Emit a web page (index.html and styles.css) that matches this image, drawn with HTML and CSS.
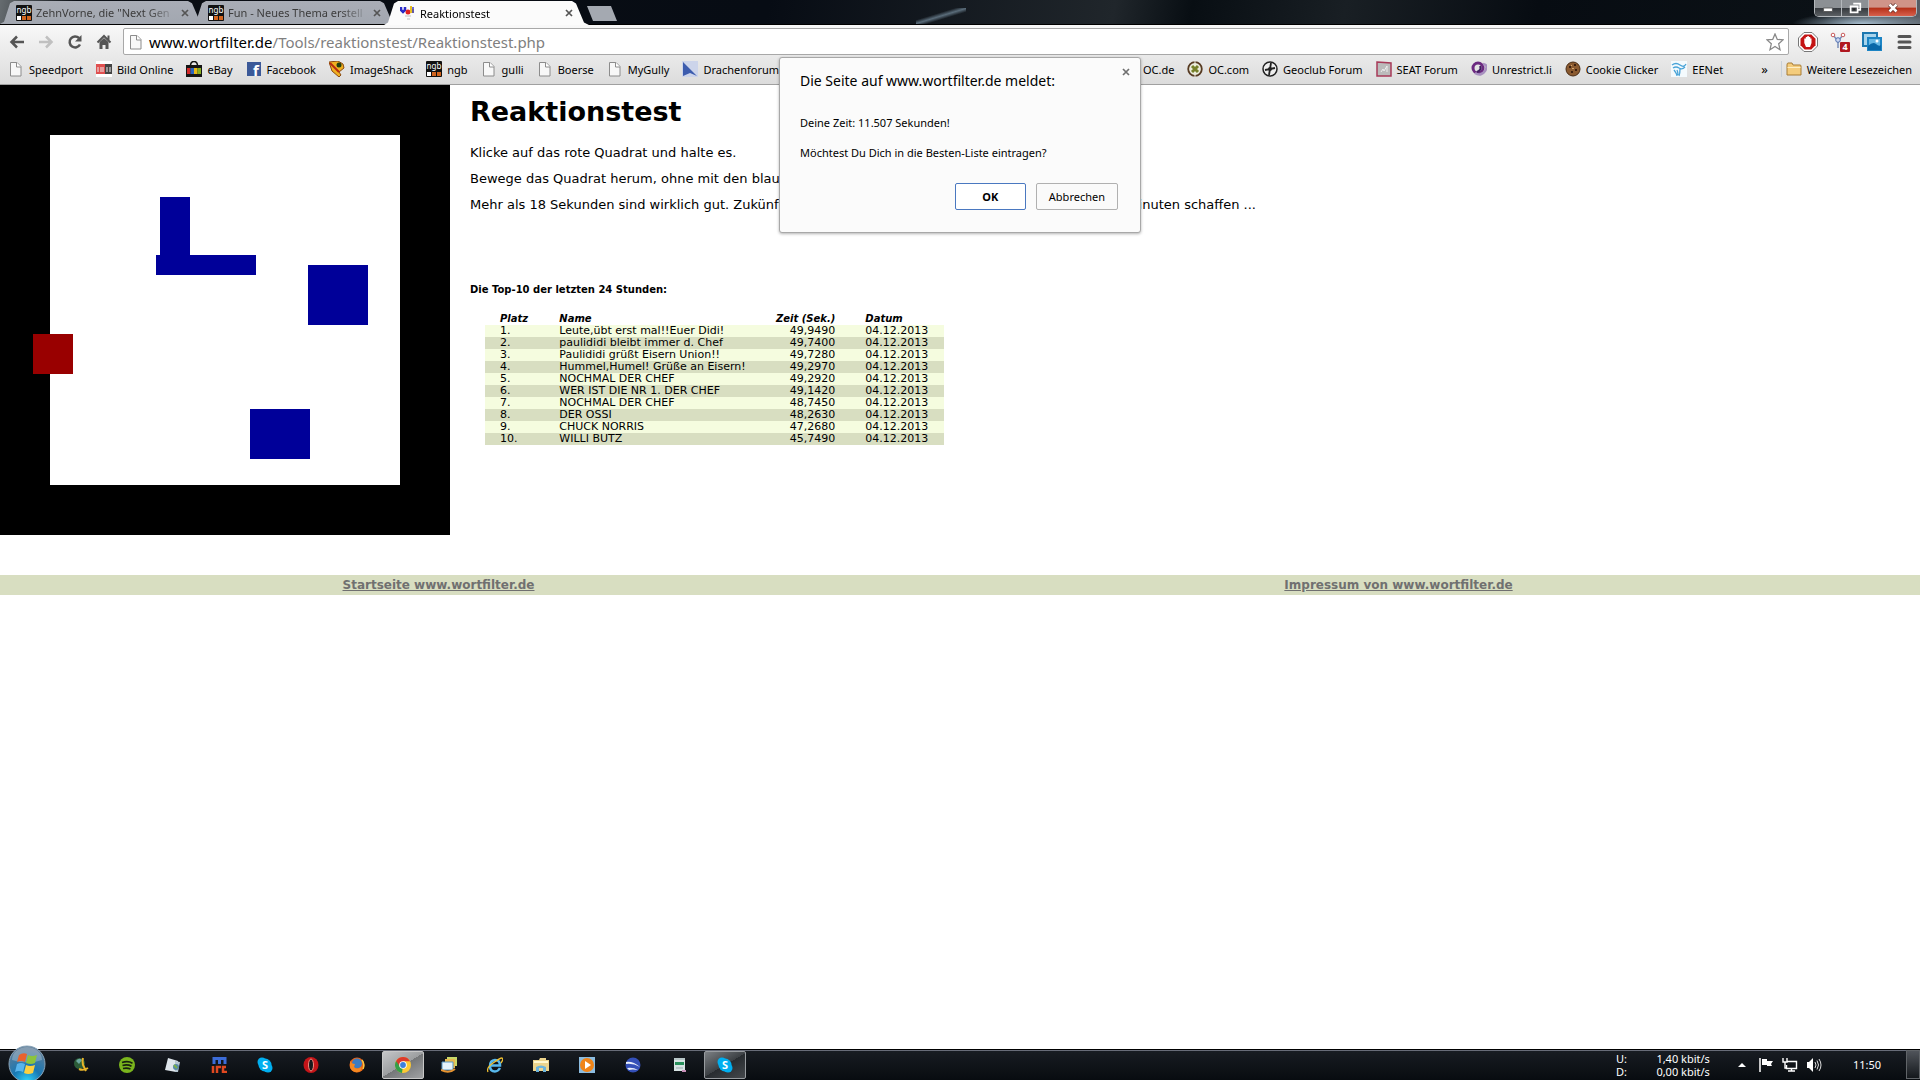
FILE: index.html
```html
<!DOCTYPE html>
<html lang="de">
<head>
<meta charset="UTF-8">
<meta name="viewport" content="width=device-width, initial-scale=1.0">
<title>Reaktionstest</title>
<link rel="stylesheet" href="styles.css">
</head>
<body>

<!-- shared icons -->
<svg class="defs" aria-hidden="true">
    <defs>
        <symbol id="i-page" viewBox="0 0 16 16"><path d="M2.500 1.500h6.500l4 4v9.500h-10.500z" fill="#f8f8f8" stroke="#8c8c8c"/><path d="M8.500 1.500v4.500h4.500" fill="#fff" stroke="#8c8c8c"/></symbol>
        <symbol id="i-ngb" viewBox="0 0 16 16"><rect width="16" height="16" rx="1" fill="#111"/><text x="8" y="8" font-size="8" text-anchor="middle" fill="#fff">ngb</text><path d="M1 11h4v4H1z" fill="#fff"/><path d="M6 11h4v4H6zM11 11h4v4h-4z" fill="#d2641e"/></symbol>
        <symbol id="i-skype" viewBox="0 0 16 16"><circle cx="5" cy="5" r="4.500" fill="#00aff0"/><circle cx="11" cy="11" r="4.500" fill="#00aff0"/><circle cx="8" cy="8" r="6.500" fill="#00aff0"/><text x="8" y="12" font-size="11" font-weight="bold" text-anchor="middle" fill="#fff">S</text></symbol>
        <symbol id="i-oc" viewBox="0 0 16 16"><circle cx="8" cy="8" r="6.800" fill="#ececdc" stroke="#563a22" stroke-width="1.800"/><path d="M5 5l6 6M11 5l-6 6" stroke="#76802a" stroke-width="3"/><path d="M8 0v3M8 13v3" stroke="#ececdc"/></symbol>
        <symbol id="i-x" viewBox="0 0 8 8"><path d="M1 1l6 6M7 1l-6 6" stroke="currentColor" stroke-width="1.700"/></symbol>
    </defs>
</svg>

<header class="browser">
    <div class="tab-strip">
        <div class="tab">
            <svg class="icon"><use href="#i-ngb"/></svg>
            <span class="tab-title">ZehnVorne, die "Next Gen</span>
            <button class="tab-close" type="button" aria-label="Tab schließen"><svg><use href="#i-x"/></svg></button>
        </div>
        <div class="tab">
            <svg class="icon"><use href="#i-ngb"/></svg>
            <span class="tab-title">Fun - Neues Thema erstell</span>
            <button class="tab-close" type="button" aria-label="Tab schließen"><svg><use href="#i-x"/></svg></button>
        </div>
        <div class="tab active">
            <svg class="icon" viewBox="0 0 16 16"><path d="M1 2v3l2 2 2-2v-3" fill="none" stroke="#2a2ac8" stroke-width="2.500"/><circle cx="8" cy="7" r="2.500" fill="#e02020"/><path d="M10 1h2v3h2v4h-4z" fill="#e8c020"/><path d="M13 2v6" stroke="#3a3ad0" stroke-width="1.500"/><path d="M5 11h6M7 14h3" stroke="#ddd" stroke-width="2"/></svg>
            <span class="tab-title">Reaktionstest</span>
            <button class="tab-close" type="button" aria-label="Tab schließen"><svg><use href="#i-x"/></svg></button>
        </div>
        <button class="new-tab" type="button" aria-label="Neuer Tab"></button>
        <div class="window-buttons">
            <button type="button" aria-label="Minimieren"><svg viewBox="0 0 16 16"><rect x="3" y="8" width="10" height="4" fill="#fff" stroke="#555"/></svg></button>
            <button type="button" aria-label="Verkleinern"><svg viewBox="0 0 16 16"><path d="M6 3h8v7h-2M3 6h8v7H3z" fill="none" stroke="#fff" stroke-width="2"/><path d="M6 8.500h2v2H6z" fill="#222"/></svg></button>
            <button class="close" type="button" aria-label="Schließen"><svg viewBox="0 0 16 16"><path d="M4 4l8 8M12 4l-8 8" stroke="#5a2a22" stroke-width="4.500"/><path d="M4 4l8 8M12 4l-8 8" stroke="#fff" stroke-width="3"/></svg></button>
        </div>
    </div>

    <div class="toolbar">
        <button class="tool" type="button" aria-label="Zurück"><svg viewBox="0 0 16 16"><path d="M15 8H3M8 2.500L2.500 8 8 13.500" fill="none" stroke="#555" stroke-width="2.500"/></svg></button>
        <button class="tool" type="button" aria-label="Vorwärts"><svg viewBox="0 0 16 16"><path d="M1 8h12M8 2.500L13.500 8 8 13.500" fill="none" stroke="#c0c0c0" stroke-width="2.500"/></svg></button>
        <button class="tool" type="button" aria-label="Neu laden"><svg viewBox="0 0 16 16"><path d="M12 4a5.500 5.500 0 1 0 1 6.500" fill="none" stroke="#555" stroke-width="2.500"/><path d="M14.500 1v6.500H8z" fill="#555"/></svg></button>
        <button class="tool" type="button" aria-label="Startseite"><svg viewBox="0 0 16 16"><path d="M1.500 8.500L8 2l6.500 6.500M12.500 1.500v5" fill="none" stroke="#555" stroke-width="2"/><path d="M3.500 8L8 4l4.500 4v7h-3v-4h-3v4h-3z" fill="#555"/></svg></button>
        <div class="omnibox">
            <svg class="icon"><use href="#i-page"/></svg>
            <div class="address"><span class="host">www.wortfilter.de</span>/Tools/reaktionstest/Reaktionstest.php</div>
            <button class="star" type="button" aria-label="Lesezeichen"><svg viewBox="0 0 18 18"><path d="M9 1l2.300 5.400 5.700.5-4.300 3.900 1.300 5.900L9 13.500l-5 3.200 1.300-5.900L1 6.900l5.700-.5z" fill="#fff" stroke="#888" stroke-width="1.300"/></svg></button>
        </div>
        <div class="extensions">
            <button type="button" aria-label="Adblock"><svg viewBox="0 0 20 20"><path d="M6 .5h8L19.500 6v8L14 19.500H6L.5 14V6z" fill="#fff" stroke="#777"/><path d="M6.700 2.500h6.600l4.200 4.200v6.600l-4.200 4.200H6.700l-4.200-4.200V6.700z" fill="#c41414"/><path d="M6.300 11V6.500h1.500V5h1.500V4h1.500v1h1.500v1.500h1.200V11l-1.500 4h-4z" fill="#fff"/></svg></button>
            <button type="button" aria-label="Links"><svg viewBox="0 0 20 20"><path d="M3 3l5 6 5-6M8 9v7" fill="none" stroke="#7a8fb8" stroke-width="1.500"/><circle cx="3" cy="3" r="1.800" fill="#fff" stroke="#c85a5a"/><circle cx="13" cy="3" r="1.800" fill="#fff" stroke="#c85a5a"/><circle cx="8" cy="8" r="2.300" fill="#cdd8f0" stroke="#5070b0"/><rect x="10" y="10" width="10" height="10" rx="1" fill="#b01820"/><text x="15" y="18" font-size="9" font-weight="bold" text-anchor="middle" fill="#fff">4</text></svg></button>
            <button type="button" aria-label="Bilder"><svg viewBox="0 0 20 20"><path d="M1 1h14v13H1z" fill="#a8d4ec" stroke="#1c78b0" stroke-width="2"/><path d="M6 6h13v12H6z" fill="#68b8e4" stroke="#1c84c4" stroke-width="2"/><path d="M6 14q5-5 8-2t5 1v5H6z" fill="#0a68a8"/><circle cx="15" cy="9" r="1.500" fill="#fff"/></svg></button>
            <button type="button" aria-label="Menü"><svg viewBox="0 0 20 20"><path d="M5 4.500h11M5 10h11M5 15.500h11" stroke="#555" stroke-width="3" stroke-linecap="round"/></svg></button>
        </div>
    </div>

    <nav class="bookmarks">
        <a href="#"><svg class="icon"><use href="#i-page"/></svg>Speedport</a>
        <a href="#"><svg class="icon" viewBox="0 0 16 16"><path d="M0 0h16v16H0z" fill="#fff"/><path d="M0 3h9v10H0z" fill="#e05050"/><path d="M9 3h7v10H9z" fill="#444"/><path d="M2 6v5M5 6v5M7 6v5M11 6v5M14 6v5" stroke="#eee"/></svg>Bild Online</a>
        <a href="#"><svg class="icon" viewBox="0 0 16 16"><path d="M4.500 5q0-4.500 3.500-4.500T11.500 5" fill="none" stroke="#111" stroke-width="1.500"/><path d="M0 4h16v12H0z" fill="#151515"/><path d="M1 7h3.500v6H1z" fill="#d42a2a"/><path d="M4.500 7H8v6H4.500z" fill="#2864c0"/><path d="M8 7h3.500v6H8z" fill="#e8b818"/><path d="M11.500 7H15v6h-3.500z" fill="#88b020"/></svg>eBay</a>
        <a href="#"><svg class="icon" viewBox="0 0 16 16"><rect x="1" y="1" width="14" height="14" fill="#3b5998"/><text x="10" y="15" font-size="15" font-weight="bold" text-anchor="middle" fill="#fff">f</text></svg>Facebook</a>
        <a href="#"><svg class="icon" viewBox="0 0 16 16"><path d="M0 1l9-1 5 3 1 4-5 4 2 3-2 2-7-6z" fill="#f0b020" stroke="#8a4a10"/><path d="M1 2l9 9" stroke="#b82a10" stroke-width="2"/><circle cx="10" cy="4" r="2.500" fill="#234010"/></svg>ImageShack</a>
        <a href="#"><svg class="icon"><use href="#i-ngb"/></svg>ngb</a>
        <a href="#"><svg class="icon"><use href="#i-page"/></svg>gulli</a>
        <a href="#"><svg class="icon"><use href="#i-page"/></svg>Boerse</a>
        <a href="#"><svg class="icon"><use href="#i-page"/></svg>MyGully</a>
        <a href="#"><svg class="icon" viewBox="0 0 16 16"><path d="M0 0h16v16H0z" fill="#ccd4ea"/><path d="M1 1l14 14-7-3-7 3z" fill="#3c5cae"/></svg>Drachenforum</a>
        <a href="#" class="push"><svg class="icon"><use href="#i-oc"/></svg>OC.de</a>
        <a href="#"><svg class="icon"><use href="#i-oc"/></svg>OC.com</a>
        <a href="#"><svg class="icon" viewBox="0 0 16 16"><circle cx="8" cy="8" r="7" fill="#eee" stroke="#222" stroke-width="1.500"/><path d="M9 2L7 14M3 9l10-2" stroke="#222" stroke-width="1.800"/><circle cx="8" cy="8" r="2" fill="#222"/></svg>Geoclub Forum</a>
        <a href="#"><svg class="icon" viewBox="0 0 16 16"><path d="M1 1l14 1v13H1z" fill="#bbb" stroke="#a83a58" stroke-width="1.500"/><path d="M5 11l2-3 1 2 3-5v6" fill="none" stroke="#eee"/></svg>SEAT Forum</a>
        <a href="#"><svg class="icon" viewBox="0 0 16 16"><circle cx="7" cy="7" r="5" fill="none" stroke="#6c2a80" stroke-width="3"/><path d="M4 12q6 4 10-2t-2-7" fill="none" stroke="#a890c0" stroke-width="2.500"/><path d="M9 5q2 4-3 6" fill="none" stroke="#402060" stroke-width="2"/></svg>Unrestrict.li</a>
        <a href="#"><svg class="icon" viewBox="0 0 16 16"><circle cx="8" cy="8" r="7" fill="#8a5a30" stroke="#4a2c14"/><path d="M4 5h2v2H4zM9 3h2v2H9zM10 8h2v2h-2zM6 10h2v2H6z" fill="#3c2010"/><path d="M6 4h1v1H6zM7 7h2v1H7z" fill="#d8a870"/></svg>Cookie Clicker</a>
        <a href="#"><svg class="icon" viewBox="0 0 16 16"><path d="M0 0h16v16H0z" fill="#f4fafd"/><path d="M1 4q4-3 8 0t6-1M2 7q3-2 6 0t6-1M3 9q3 4 3 6M6 9q1 2 1 5M9 8q0 4-1 7" fill="none" stroke="#4aa4d8" stroke-width="1.300"/></svg>EENet</a>
        <button class="more" type="button">»</button>
        <a href="#" class="folder"><svg class="icon" viewBox="0 0 16 16"><path d="M1 4q0-2 1-2h4l1 2h7q1 0 1 1v9H1z" fill="#f4cc7c" stroke="#a87c34"/><path d="M1.500 6.500h13" stroke="#fdeec4"/></svg>Weitere Lesezeichen</a>
    </nav>
</header>

<main>
    <div class="content">
        <div class="game">
            <div class="field"></div>
            <div class="block block-1"></div>
            <div class="block block-2"></div>
            <div class="block block-3"></div>
            <div class="block block-4"></div>
            <div class="player"></div>
        </div>
        <div class="info">
            <h1>Reaktionstest</h1>
            <p>Klicke auf das rote Quadrat und halte es.</p>
            <p>Bewege das Quadrat herum, ohne mit den blauen</p>
            <p class="split"><span>Mehr als 18 Sekunden sind wirklich gut. Zukünftig</span><span>Minuten schaffen ...</span></p>
            <h2>Die Top-10 der letzten 24 Stunden:</h2>
            <table class="scores">
                <thead>
                    <tr><th>Platz</th><th>Name</th><th>Zeit (Sek.)</th><th>Datum</th></tr>
                </thead>
                <tbody>
                    <tr><td>1.</td><td>Leute,übt erst mal!!Euer Didi!</td><td>49,9490</td><td>04.12.2013</td></tr>
                    <tr><td>2.</td><td>paulididi bleibt immer d. Chef</td><td>49,7400</td><td>04.12.2013</td></tr>
                    <tr><td>3.</td><td>Paulididi grüßt Eisern Union!!</td><td>49,7280</td><td>04.12.2013</td></tr>
                    <tr><td>4.</td><td>Hummel,Humel! Grüße an Eisern!</td><td>49,2970</td><td>04.12.2013</td></tr>
                    <tr><td>5.</td><td>NOCHMAL DER CHEF</td><td>49,2920</td><td>04.12.2013</td></tr>
                    <tr><td>6.</td><td>WER IST DIE NR 1. DER CHEF</td><td>49,1420</td><td>04.12.2013</td></tr>
                    <tr><td>7.</td><td>NOCHMAL DER CHEF</td><td>48,7450</td><td>04.12.2013</td></tr>
                    <tr><td>8.</td><td>DER OSSI</td><td>48,2630</td><td>04.12.2013</td></tr>
                    <tr><td>9.</td><td>CHUCK NORRIS</td><td>47,2680</td><td>04.12.2013</td></tr>
                    <tr><td>10.</td><td>WILLI BUTZ</td><td>45,7490</td><td>04.12.2013</td></tr>
                </tbody>
            </table>
        </div>
    </div>
    <div class="footer-links">
        <div><a href="#">Startseite www.wortfilter.de</a></div>
        <div><a href="#">Impressum von www.wortfilter.de</a></div>
    </div>
</main>

<div class="dialog" role="dialog" aria-labelledby="dialog-title">
    <button class="dialog-close" type="button" aria-label="Schließen"><svg><use href="#i-x"/></svg></button>
    <div class="dialog-title" id="dialog-title">Die Seite auf www.wortfilter.de meldet:</div>
    <p>Deine Zeit: 11.507 Sekunden!</p>
    <p>Möchtest Du Dich in die Besten-Liste eintragen?</p>
    <div class="dialog-buttons">
        <button class="ok" type="button">OK</button>
        <button type="button">Abbrechen</button>
    </div>
</div>

<footer class="taskbar">
    <button class="start" type="button" aria-label="Start">
        <svg viewBox="0 0 38 38"><defs><radialGradient id="orb" cx=".5" cy="1" r=".9"><stop offset="0" stop-color="#30d8ff"/><stop offset=".45" stop-color="#1878b4"/><stop offset="1" stop-color="#5c7c98"/></radialGradient></defs><circle cx="19" cy="19" r="18" fill="url(#orb)" stroke="#8aa4b8"/><path d="M4 15a15 13 0 0 1 30 0q-15 5-30 0z" fill="#fff" opacity=".25"/><path d="M11 10q4-3 8-1l-2 8q-4-2-8 0z" fill="#e8622c"/><path d="M20 10q4 2 9 0l-2 8q-4 2-9 0z" fill="#8cc43c"/><path d="M9 19q4-2 8 0l-2 8q-4-2-8 0z" fill="#58b4ec"/><path d="M18 20q4 2 9 0l-2 8q-5 2-9 0z" fill="#fcd040"/></svg>
    </button>
    <div class="tasks">
        <button type="button" aria-label="Jdownloader"><svg viewBox="0 0 16 16"><circle cx="6.500" cy="6.500" r="5.500" fill="#2c5c38"/><path d="M3 4q3-4 6-1l-3 4z" fill="#6ca8a0"/><path d="M10 1q-1 3 0 7l3 6M6 12q4 2 9-1" fill="none" stroke="#e8b428" stroke-width="2"/></svg></button>
        <button type="button" aria-label="Spotify"><svg viewBox="0 0 16 16"><circle cx="8" cy="8" r="8" fill="#7ab51d"/><path d="M3 5.500q6-2 10.500.7M3.500 8.500q5-1.500 9 .7M4 11.500q4-1 7.500.5" fill="none" stroke="#182010" stroke-width="1.600"/></svg></button>
        <button type="button" aria-label="Editor"><svg viewBox="0 0 16 16"><path d="M3 1l10 3-2 11L0 13z" fill="#dfe6ec"/><path d="M10 4l5 1-2 10h-3z" fill="#b4c4d0"/><circle cx="11" cy="10" r="3" fill="#5888a8"/><path d="M9 8l3 3" stroke="#7ab048" stroke-width="2"/></svg></button>
        <button type="button" aria-label="mIRC"><svg viewBox="0 0 16 16"><path d="M3 7V1.500h11V7M8.500 1v6" fill="none" stroke="#3c6cd8" stroke-width="3"/><path d="M2 9v7M6 16v-6h4M15 10h-3v5h4" fill="none" stroke="#e04820" stroke-width="2.500"/></svg></button>
        <button type="button" aria-label="Skype"><svg><use href="#i-skype"/></svg></button>
        <button type="button" aria-label="Opera"><svg viewBox="0 0 16 16"><ellipse cx="8" cy="8" rx="7.500" ry="8" fill="#c41418"/><ellipse cx="8" cy="8" rx="2.500" ry="6" fill="#16181c" stroke="#f08c80"/></svg></button>
        <button type="button" aria-label="Firefox"><svg viewBox="0 0 16 16"><circle cx="8" cy="8" r="7.500" fill="#e86418"/><circle cx="8" cy="6.500" r="5" fill="#3c7cc0"/><path d="M1 3q1 4 5 4l-1 3q3 3 7 0 2 3-3 5-6 1-8-5z" fill="#f48820"/><path d="M13 3q3 4 1 9" stroke="#fcc840" fill="none" stroke-width="1.500"/></svg></button>
        <button class="open bright" type="button" aria-label="Chrome"><svg viewBox="0 0 16 16"><circle cx="8" cy="8" r="8" fill="#fcc934"/><path d="M8 8L1.100 4A8 8 0 0 0 7 16z" fill="#34a048"/><path d="M8 8V4.300h7.100A8 8 0 0 0 1.100 4L4.500 9z" fill="#dc3a2c"/><circle cx="8" cy="8" r="3.800" fill="#fff"/><circle cx="8" cy="8" r="2.900" fill="#3c80dc"/></svg></button>
        <button type="button" aria-label="Mail"><svg viewBox="0 0 16 16"><path d="M6 0h10v9H6z" fill="#c8d868"/><path d="M4 2h10v9H4z" fill="#e8b850"/><path d="M1 5h11v8H1z" fill="#e4f2fa" stroke="#5898c4"/><path d="M0 13q8 4 14-1" fill="none" stroke="#e89430" stroke-width="2"/></svg></button>
        <button type="button" aria-label="Internet Explorer"><svg viewBox="0 0 16 16"><path d="M13 11q-2 3.500-5 3.500-5 0-5-5.500t5-6q5 0 5 5.500H4" fill="none" stroke="#58b8ec" stroke-width="2.500"/><path d="M1 15q-2-4 5-9t9-5q2 1-1 5" fill="none" stroke="#f0c030" stroke-width="1.300"/></svg></button>
        <button type="button" aria-label="Explorer"><svg viewBox="0 0 16 16"><path d="M0 3h6l1-2h6v2h3v11H0z" fill="#ecd48c"/><path d="M1 5h14" stroke="#fff8d0" stroke-width="2"/><path d="M3 15v-5q5-3 10 0v5h-3v-4H6v4z" fill="#6cb4dc"/></svg></button>
        <button type="button" aria-label="Media Player"><svg viewBox="0 0 16 16"><rect width="16" height="16" fill="#8cbce0"/><circle cx="8" cy="8" r="7" fill="#f08418"/><path d="M6 4l6 4-6 4z" fill="#fff"/></svg></button>
        <button type="button" aria-label="Google Earth"><svg viewBox="0 0 16 16"><circle cx="8" cy="8" r="7.500" fill="#3450b8"/><path d="M1 5q7-1 14 5Q8 6 1 7zM2 11q6-1 11 2-6-1-9 0z" fill="#e8eefc"/></svg></button>
        <button type="button" aria-label="Notepad"><svg viewBox="0 0 16 16"><path d="M3 1h11v13H3z" fill="#d8e4e4"/><path d="M4 5h9v3H4z" fill="#28905c"/><path d="M3 2h11M5 11h7" stroke="#96a8ac"/><path d="M11 14h4" stroke="#c890b8" stroke-width="2"/></svg></button>
        <button class="open" type="button" aria-label="Skype"><svg><use href="#i-skype"/></svg></button>
    </div>
    <div class="traffic">
        <span>U:</span><span>1,40 kbit/s</span>
        <span>D:</span><span>0,00 kbit/s</span>
    </div>
    <div class="tray">
        <svg viewBox="0 0 16 16"><path d="M4 10l4-4 4 4z" fill="#fff"/></svg>
        <svg viewBox="0 0 16 16"><path d="M2 1v14" stroke="#fff" stroke-width="1.500"/><path d="M4 2h5v2h6l-2 3 1 2H9V8H4z" fill="#fff"/></svg>
        <svg viewBox="0 0 16 16"><path d="M5 4.500h9.500v7H4.500V8M6 14h7M9.500 11.500V14" fill="none" stroke="#fff" stroke-width="1.400"/><path d="M1 1v4h4V1M3 5v6h2" fill="none" stroke="#fff" stroke-width="1.400"/></svg>
        <svg viewBox="0 0 16 16"><path d="M1 5h2l4-4v14l-4-4H1z" fill="#fff"/><path d="M9 5q2 3 0 6M11 3.500q3 4.500 0 9M13 2q4 6 0 12" fill="none" stroke="#ddd"/></svg>
    </div>
    <time class="clock">11:50</time>
    <button class="show-desktop" type="button" aria-label="Desktop anzeigen"></button>
</footer>

</body>
</html>
```
FILE: styles.css
```css
* {
    box-sizing: border-box;
}

body {
    margin: 0;
    min-height: 100vh;
    display: flex;
    flex-direction: column;
    position: relative;
    background-color: #fff;
    color: #000;
    font-family: "DejaVu Sans", Verdana, sans-serif;
    font-size: 13px;
}

button {
    margin: 0;
    padding: 0;
    border: none;
    background: none;
    font: inherit;
    color: inherit;
}

svg {
    display: block;
    flex: none;
}

.defs {
    position: absolute;
    width: 0;
    height: 0;
}

.icon {
    width: 16px;
    height: 16px;
}

/* browser window */
.browser {
    font-family: "Noto Sans", "Segoe UI", sans-serif;
    font-size: 11px;
    background: linear-gradient(#f8f8f8 25px, #dcdcdc);
    border-bottom: 1px solid #a0a0a0;
}

.tab-strip {
    display: flex;
    height: 25px;
    padding-top: 1px;
    border-bottom: 1px solid #000;
    background: radial-gradient(ellipse 70px 12px at 97% 100%, #a8bfd0, transparent),
        linear-gradient(163deg, transparent 38%, #5a6c7a 50%, transparent 62%) 49% 100% / 50px 16px no-repeat,
        linear-gradient(100deg, #666c70 0, #0a0e14 4%, #070c14 40%, #20262b 58%, #080e13 62%, #191f24 70%, #070c12 80%, #0b1116 95%, #596068 100%);
}

.tab {
    display: flex;
    align-items: center;
    width: 205px;
    height: 23px;
    margin-right: -13px;
    padding: 0 16px;
    background: linear-gradient(#a9adb6, #a2a7b0);
    color: #3c3c3c;
    clip-path: polygon(0 100%, 4px 90%, 10px 10%, 14px 0, 188px 0, 192px 10%, 200px 90%, 205px 100%);
}

.tab.active {
    height: 24px;
    background: #fbfbfb;
    color: #000;
}

.tab-title {
    flex: 1;
    margin: 0 4px;
    white-space: nowrap;
    mask-image: linear-gradient(90deg, #000 80%, transparent);
}

.tab-close {
    color: #555;
}

.tab-close svg,
.dialog-close svg {
    width: 8px;
    height: 8px;
}

.new-tab {
    width: 30px;
    height: 15px;
    margin: 5px 0 0 11px;
    background: #a4a9b1;
    clip-path: polygon(0 0, 24px 0, 30px 100%, 6px 100%);
}

.window-buttons {
    display: flex;
    height: 17px;
    margin: -1px 3px 0 auto;
    border: 1px solid #b4b8bc;
    border-top: none;
    border-radius: 0 0 5px 5px;
    overflow: hidden;
}

.window-buttons button {
    display: flex;
    align-items: center;
    justify-content: center;
    width: 27px;
    background: linear-gradient(#8c9094 50%, #34383c 50%, #5c6064);
    border-right: 1px solid #b4b8bc;
}

.window-buttons .close {
    width: 47px;
    border: none;
    background: linear-gradient(#d09488 45%, #b43018 50%, #d8604c);
}

.window-buttons svg {
    width: 14px;
    height: 14px;
}

.toolbar {
    display: flex;
    align-items: center;
    height: 35px;
    padding: 0 6px 2px 3px;
}

.tool {
    width: 29px;
    padding: 0 6px;
}

.tool svg {
    width: 16px;
    height: 16px;
}

.omnibox {
    display: flex;
    align-items: center;
    flex: 1;
    height: 27px;
    margin-left: 4px;
    padding: 0 4px 0 4px;
    background: #fff;
    border: 1px solid #a8a8a8;
    border-radius: 2px;
}

.address {
    flex: 1;
    margin-left: 5px;
    font-size: 15px;
    color: #808080;
}

.host {
    color: #000;
}

.star svg {
    width: 18px;
    height: 18px;
}

.extensions {
    display: flex;
    gap: 12px;
    padding-left: 9px;
}

.extensions svg {
    width: 20px;
    height: 20px;
}

.bookmarks {
    display: flex;
    align-items: center;
    gap: 13px;
    height: 24px;
    padding: 0 8px 6px;
}

.bookmarks a {
    display: flex;
    align-items: center;
    gap: 5px;
    color: #000;
    text-decoration: none;
    white-space: nowrap;
}

.bookmarks .push {
    margin-left: auto;
}

.more {
    margin-left: 25px;
    font-size: 13px;
}

.bookmarks .folder {
    padding-left: 4px;
    border-left: 1px solid #c8d0d8;
}

/* page */
main {
    flex: 1;
}

.content {
    display: flex;
    gap: 20px;
    margin-bottom: 40px;
}

.game {
    position: relative;
    flex: none;
    width: 450px;
    height: 450px;
    padding: 50px;
    background: #000;
}

.field {
    height: 100%;
    background: #fff;
}

.block,
.player {
    position: absolute;
    background: #000099;
}

.block-1 {
    left: 160px;
    top: 112px;
    width: 30px;
    height: 60px;
}

.block-2 {
    left: 156px;
    top: 170px;
    width: 100px;
    height: 20px;
}

.block-3 {
    left: 308px;
    top: 180px;
    width: 60px;
    height: 60px;
}

.block-4 {
    left: 250px;
    top: 324px;
    width: 60px;
    height: 50px;
}

.player {
    left: 33px;
    top: 249px;
    width: 40px;
    height: 40px;
    background: #990000;
}

.info {
    flex: 1;
    padding-top: 10px;
}

h1 {
    margin: 0 0 16px;
    font-size: 27px;
    line-height: 34px;
}

.info p {
    margin: 0 0 10px;
    line-height: 16px;
}

.split {
    display: flex;
    gap: 332px;
}

h2 {
    margin: 69px 0 15px;
    font-size: 10px;
    line-height: 16px;
}

.scores {
    width: 459px;
    margin-left: 15px;
    border-collapse: collapse;
    font-size: 11px;
    line-height: 12px;
}

.scores th,
.scores td {
    height: 12px;
    padding: 0 15px;
    text-align: left;
    white-space: nowrap;
}

.scores th {
    font-size: 10px;
    font-style: italic;
}

.scores th:nth-child(1) {
    width: 60px;
}

.scores th:nth-child(3) {
    width: 90px;
}

.scores th:nth-child(4) {
    width: 94px;
}

.scores th:nth-child(3),
.scores td:nth-child(3) {
    text-align: right;
}

.scores tbody tr:nth-child(odd) {
    background: #f5fcdf;
}

.scores tbody tr:nth-child(even) {
    background: #d8dec1;
}

.footer-links {
    display: table;
    width: 100%;
    background: #d8dec1;
    font-size: 12px;
    line-height: 20px;
}

.footer-links div {
    display: table-cell;
    text-align: center;
}

.footer-links a {
    color: #707070;
    font-weight: bold;
}

/* alert */
.dialog {
    position: absolute;
    top: 57px;
    left: 50%;
    width: 362px;
    margin-left: -181px;
    padding: 13px 22px 22px 20px;
    background: #fbfbfb;
    border: 1px solid #a8a8a8;
    border-radius: 3px;
    box-shadow: 0 1px 3px rgba(0, 0, 0, 0.3);
    font-family: "Noto Sans", "Segoe UI", sans-serif;
    font-size: 11px;
}

.dialog-title {
    margin-bottom: 24px;
    font-size: 14px;
    line-height: 20px;
}

.dialog p {
    margin: 0 0 14px;
    line-height: 16px;
}

.dialog-close {
    position: absolute;
    top: 10px;
    right: 10px;
    color: #707070;
}

.dialog-buttons {
    display: flex;
    justify-content: flex-end;
    gap: 10px;
    padding-top: 8px;
}

.dialog-buttons button {
    height: 27px;
    padding: 0 12px;
    background: #fafafa;
    border: 1px solid #b0b0b0;
    border-radius: 2px;
}

.dialog-buttons .ok {
    width: 71px;
    border-color: #4a78c0;
    background: #fff;
    font-weight: bold;
}

/* taskbar */
.taskbar {
    display: flex;
    align-items: center;
    height: 31px;
    background: linear-gradient(#000 1px, #686c78 1px, #686c78 2px, #181c22 2px, #080c10);
    color: #fff;
    font-family: "Noto Sans", "Segoe UI", sans-serif;
    font-size: 11px;
}

.start {
    width: 38px;
    height: 31px;
    margin: 0 14px 0 8px;
}

.start svg {
    width: 38px;
    height: 38px;
    margin-top: -4px;
}

.tasks {
    display: flex;
    gap: 4px;
    flex: 1;
}

.tasks button {
    display: flex;
    align-items: center;
    justify-content: center;
    width: 42px;
    height: 28px;
    border-radius: 2px;
}

.tasks svg {
    width: 16px;
    height: 16px;
}

.tasks .open {
    border: 1px solid #989ca0;
    background: linear-gradient(150deg, #7c8084, #3c4044 50%, #282c30 50%, #44484c);
}

.tasks .bright {
    border-color: #c8c8c8;
    background: linear-gradient(150deg, #c4c6c8, #9c9ea0 50%, #747678 50%, #a0a2a4);
}

.traffic {
    display: grid;
    grid-template-columns: 32px 62px;
    line-height: 13px;
    text-align: right;
    white-space: nowrap;
}

.traffic span:nth-child(odd) {
    text-align: left;
}

.tray {
    display: flex;
    gap: 8px;
    margin-left: 24px;
}

.tray svg {
    width: 16px;
    height: 16px;
}

.clock {
    margin: 0 25px 0 31px;
}

.show-desktop {
    width: 14px;
    height: 29px;
    border: 1px solid #606468;
    background: linear-gradient(#50545a, #14181c);
}
```
